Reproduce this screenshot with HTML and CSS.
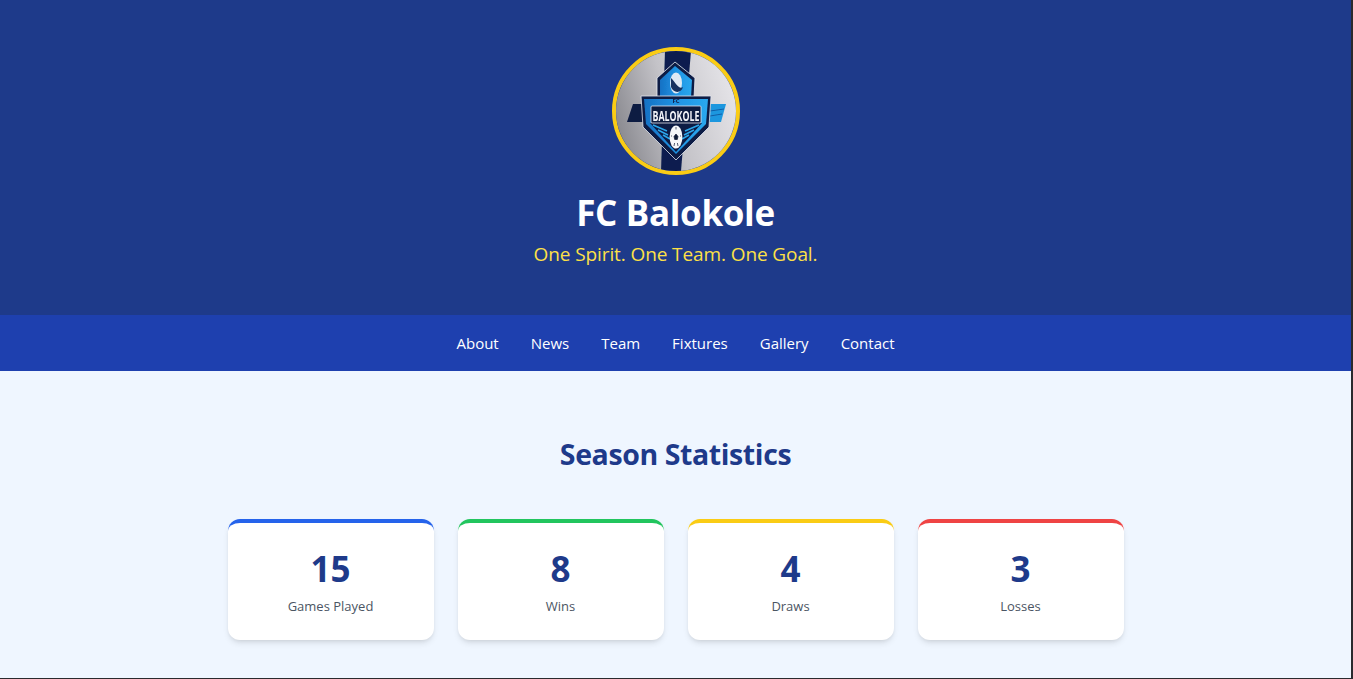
FILE: index.html
```html
<!DOCTYPE html>
<html lang="en">
  <head>
    <meta charset="UTF-8" />
    <meta name="viewport" content="width=device-width, initial-scale=1.0" />
    <title>FC Balokole</title>
    <link rel="stylesheet" href="styles.css">
  </head>
  <body>
    <div class="page">
      <header class="hero">
        <div class="logo">
          <svg viewBox="0 0 120 120" width="120" height="120">
            <defs>
              <linearGradient id="metal" x1="0" y1="0.6" x2="1" y2="0.3">
                <stop offset="0" stop-color="#8b8b91" />
                <stop offset="0.45" stop-color="#c4c3c8" />
                <stop offset="1" stop-color="#e6e5e9" />
              </linearGradient>
              <linearGradient id="shieldBlue" x1="0" y1="0" x2="1" y2="0">
                <stop offset="0" stop-color="#1671c4" />
                <stop offset="0.5" stop-color="#1f93e4" />
                <stop offset="1" stop-color="#2aa8ee" />
              </linearGradient>
              <filter id="soft">
                <feGaussianBlur stdDeviation="0.45" />
              </filter>
            </defs>
            <rect width="120" height="120" fill="url(#metal)" />
            <g filter="url(#soft)">
              <!-- stripes behind the crest -->
              <path d="M49 0H75L65 120H45Z" fill="#0c1f4f" />
              <path d="M17 53H38V71H11Z" fill="#0a1a42" />
              <path d="M90 53H110L105 71H90Z" fill="#1f97df" />
              <path d="M94 60L108 58M94 65L106 63" stroke="#0f5fa8" stroke-width="1" />
              <!-- top of the crest -->
              <path d="M59 11L79 27L78 47H41V27Z" fill="#101d45" stroke="#e8ebf2" stroke-width="0.8" />
              <path d="M59 15L76 29L75 46H44V29Z" fill="url(#shieldBlue)" />
              <ellipse cx="60" cy="32" rx="6" ry="10.5" fill="#dfeaf4" />
              <path d="M55 27C60 32 63 39 67 36C65 43 57 42 55 36Z" fill="#16315f" />
              <!-- main crest -->
              <path d="M25 45H95L93 76L60 109L27 76Z" fill="#101d45" stroke="#dfe3ec" stroke-width="0.8" />
              <path d="M28 48H92L90 73L60 103L30 73Z" fill="url(#shieldBlue)" />
              <path d="M34 72H86L60 101Z" fill="#0e1b44" />
              <path d="M37 74L51 80M83 74L69 80M42 79L52 84M78 79L68 84M47 84L54 88M73 84L66 88" stroke="#2aa6ea" stroke-width="1.6" />
              <rect x="35" y="55" width="50" height="17" rx="1" fill="#101a40" stroke="#e2e6ee" stroke-width="0.8" />
              <text class="logo-fc" x="60" y="52" text-anchor="middle">FC</text>
              <text class="logo-name" x="60" y="69.5" text-anchor="middle" textLength="47" lengthAdjust="spacingAndGlyphs">BALOKOLE</text>
              <!-- ball -->
              <ellipse cx="60" cy="86" rx="6.4" ry="11.5" fill="#f6f7f9" />
              <path d="M60 83L62 85.5L61.3 88.5H58.7L58 85.5ZM60 76V78.5M55 85H56M64 85H65M58 95L58.6 92M62 95L61.4 92" fill="#111a35" stroke="#111a35" stroke-width="0.7" />
            </g>
          </svg>
        </div>
        <h1>FC Balokole</h1>
        <p class="tagline">One Spirit. One Team. One Goal.</p>
      </header>

      <nav class="main-nav">
        <a href="#about">About</a>
        <a href="#news">News</a>
        <a href="#team">Team</a>
        <a href="#fixtures">Fixtures</a>
        <a href="#gallery">Gallery</a>
        <a href="#contact">Contact</a>
      </nav>

      <main class="stats">
        <h2>Season Statistics</h2>
        <div class="stat-grid">
          <div class="stat-card card-blue">
            <div class="stat-value">15</div>
            <div class="stat-label">Games Played</div>
          </div>
          <div class="stat-card card-green">
            <div class="stat-value">8</div>
            <div class="stat-label">Wins</div>
          </div>
          <div class="stat-card card-yellow">
            <div class="stat-value">4</div>
            <div class="stat-label">Draws</div>
          </div>
          <div class="stat-card card-red">
            <div class="stat-value">3</div>
            <div class="stat-label">Losses</div>
          </div>
        </div>
      </main>
    </div>
  </body>
</html>
```

FILE: styles.css
```css
html,
body {
  height: 100%;
  overflow: hidden;
}

body {
  margin: 0;
  padding: 0 2px 1px 0;
  box-sizing: border-box;
  background-color: #2a2a2e;
  font-family: "Open Sans", "Noto Sans", sans-serif;
}

.page {
  height: 100%;
  overflow: hidden;
  background-color: #eff6ff;
}

.hero {
  height: 315px;
  box-sizing: border-box;
  padding-top: 47px;
  background-color: #1e3a8a;
  text-align: center;
}

.logo {
  width: 120px;
  height: 120px;
  margin: 0 auto;
  border: 4px solid #facc15;
  border-radius: 50%;
  overflow: hidden;
}

.logo svg {
  display: block;
}

.logo-fc {
  font-size: 6px;
  font-weight: 700;
  fill: #101d45;
}

.logo-name {
  font-size: 14px;
  font-weight: 700;
  fill: #f3f5f9;
}

h1 {
  margin: 16px 0 0;
  font-size: 35px;
  line-height: 44px;
  font-weight: 700;
  letter-spacing: -0.35px;
  color: #fff;
}

.tagline {
  margin: 5px 0 0;
  font-size: 19px;
  line-height: 28px;
  letter-spacing: -0.1px;
  color: #fde047;
}

.main-nav {
  display: flex;
  justify-content: center;
  gap: 32px;
  height: 56px;
  align-items: center;
  background-color: #1e40af;
}

.main-nav a {
  color: #fff;
  font-size: 15px;
  text-decoration: none;
}

.stats {
  padding-top: 63px;
}

h2 {
  margin: 0 0 45px;
  font-size: 28.5px;
  line-height: 40px;
  font-weight: 700;
  letter-spacing: -0.4px;
  text-align: center;
  color: #1e3a8a;
}

.stat-grid {
  display: grid;
  grid-template-columns: repeat(4, 1fr);
  gap: 24px;
  max-width: 896px;
  margin: 0 auto;
}

.stat-card {
  height: 121px;
  box-sizing: border-box;
  padding-top: 26px;
  border-top: 4px solid;
  border-radius: 12px;
  background-color: #fff;
  box-shadow: 0 4px 6px -1px rgba(0, 0, 0, 0.1), 0 2px 4px -2px rgba(0, 0, 0, 0.1);
  text-align: center;
}

.card-blue {
  border-top-color: #2563eb;
}

.card-green {
  border-top-color: #22c55e;
}

.card-yellow {
  border-top-color: #facc15;
}

.card-red {
  border-top-color: #ef4444;
}

.stat-value {
  font-size: 35px;
  line-height: 40px;
  font-weight: 700;
  color: #1e3a8a;
}

.stat-label {
  margin-top: 7px;
  font-size: 13px;
  line-height: 20px;
  color: #4b5563;
}
```
